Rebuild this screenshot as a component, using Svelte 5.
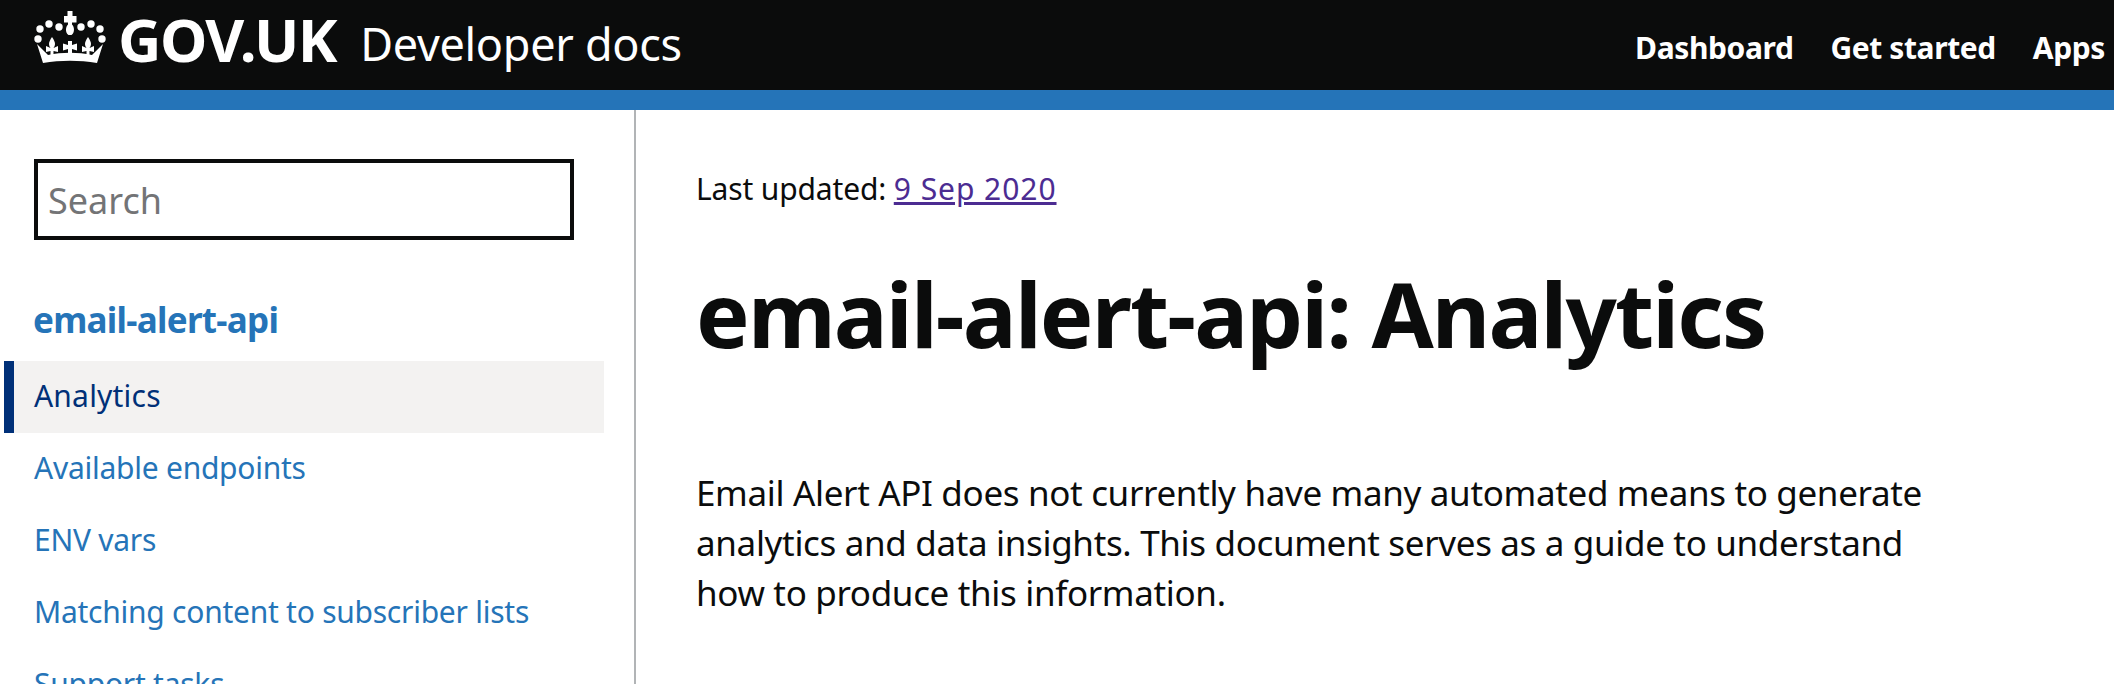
<script>
  const nav = ['Available endpoints', 'ENV vars', 'Matching content to subscriber lists', 'Support tasks'];
</script>

<div class="page">
  <header class="top">
    <div class="brand">
      <svg class="crown" viewBox="0 0 72 52" aria-hidden="true">
        <g fill="#fff">
          <circle cx="6" cy="18" r="3.7"/><circle cx="15" cy="13" r="3.7"/><circle cx="25" cy="16" r="3.7"/>
          <circle cx="47" cy="16" r="3.7"/><circle cx="57" cy="13" r="3.7"/><circle cx="66" cy="18" r="3.7"/>
          <circle cx="4" cy="28" r="3.7"/><circle cx="68" cy="28" r="3.7"/>
          <path d="M33.500 0h5v5h4v6.500h-4.500v2c2.500 2.500 3 8 -.5 10.500h-3c-3.500-2.500-3-8-.5-10.500v-2H30V5h3.500z"/>
          <path d="M34 30h4v4l5-1.500v7l-5-1.500v6h-4v-6l-5 1.500v-7l5 1.500z"/>
          <path d="M18 26c2 3 3 5 3 7 0 2-1 3-1.500 4l4.500-2v6l-4.500-1v5h-3v-5l-4.500 1v-6l4.500 2c-.5-1-1.500-2-1.500-4 0-2 1-4 3-7z"/>
          <path d="M54 26c2 3 3 5 3 7 0 2-1 3-1.500 4l4.500-2v6l-4.500-1v5h-3v-5l-4.500 1v-6l4.500 2c-.5-1-1.500-2-1.500-4 0-2 1-4 3-7z"/>
          <path d="M3 33l9 9 2 2c14-3 30-3 44 0l2-2 9-9-6 19c-18-3-36-3-54 0z"/>
        </g>
      </svg>
      <span class="wordmark">GOV.UK</span>
      <span class="product">Developer docs</span>
    </div>
    <nav class="topnav">
      <a href="#d">Dashboard</a>
      <a href="#g">Get started</a>
      <a href="#a">Apps</a>
    </nav>
  </header>
  <div class="stripe"></div>
  <div class="body">
    <aside class="side">
      <input class="search" placeholder="Search" />
      <a class="section" href="#e">email-alert-api</a>
      <a class="item active" href="#an">Analytics</a>
      {#each nav as n}
        <a class="item" href="#n">{n}</a>
      {/each}
    </aside>
    <main class="main">
      <p class="updated">Last updated: <a href="#u">9 Sep 2020</a></p>
      <h1>email-alert-api: Analytics</h1>
      <p class="lead">Email Alert API does not currently have many automated means to generate analytics and data insights. This document serves as a guide to understand how to produce this information.</p>
    </main>
  </div>
</div>

<style>
  :global(body) { margin: 0; background: #fff; overflow: hidden; }
  .page { width: 2114px; height: 684px; overflow: hidden; font-family: "Noto Sans", sans-serif; color: #0b0c0c; }
  a { text-decoration: none; }
  .top { height: 90px; background: #0b0c0c; display: flex; justify-content: space-between; }
  .brand { display: flex; align-items: flex-start; padding-left: 34px; color: #fff; }
  .crown { width: 72px; height: 52px; margin-top: 11px; }
  .wordmark { font-weight: 700; font-size: 60px; letter-spacing: -1.5px; line-height: 78px; margin-left: 12px; }
  .product { font-size: 45px; letter-spacing: -0.3px; line-height: 88px; margin-left: 24px; }
  .topnav { display: flex; gap: 37px; padding: 28px 9px 0 0; }
  .topnav a { color: #fff; font-weight: 700; font-size: 30px; letter-spacing: -0.4px; line-height: 40px; }
  .stripe { height: 20px; background: #2574b8; }
  .body { display: flex; height: 574px; overflow: hidden; }
  .side { box-sizing: border-box; width: 636px; flex: none; border-right: 2px solid #b1b4b6; padding: 49px 30px 0 4px; display: flex; flex-direction: column; align-items: stretch; }
  .search { box-sizing: border-box; width: 540px; height: 81px; margin-left: 30px; flex: none; border: 4px solid #0b0c0c; padding: 2px 10px 0; font: 36px "Noto Sans", sans-serif; outline: none; }
  .search::placeholder { color: #737476; opacity: 1; }
  .section { margin: 56px 0 17px 29px; font-weight: 700; font-size: 35px; letter-spacing: -0.72px; line-height: 48px; color: #2574b8; }
  .item { flex: none; height: 72px; line-height: 70px; font-size: 30px; letter-spacing: -0.25px; color: #2574b8; padding-left: 30px; }
  .active { background: #f3f2f1; border-left: 10px solid #003078; padding-left: 20px; color: #003078; letter-spacing: 0.2px; }
  .main { padding: 54px 0 0 60px; }
  .updated { margin: 0; font-size: 30px; letter-spacing: -0.15px; line-height: 50px; }
  .updated a { color: #4c2c92; text-decoration: underline; letter-spacing: 0.95px; }
  h1 { margin: 44px 0 0; font-size: 90px; letter-spacing: -1.85px; line-height: 110px; font-weight: 700; }
  .lead { margin: 100px 0 0; width: 1240px; font-size: 35px; letter-spacing: -0.34px; line-height: 50px; }
</style>
